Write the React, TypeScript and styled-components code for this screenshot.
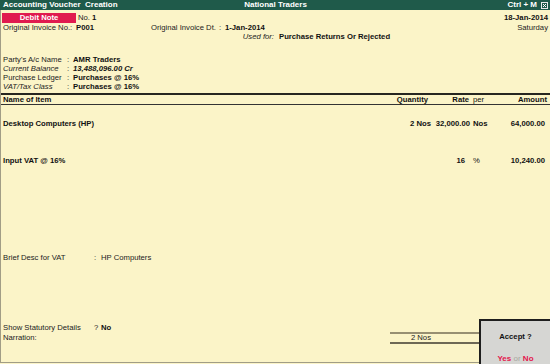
import styled, { createGlobalStyle } from 'styled-components';

const GlobalStyle = createGlobalStyle`
  html, body {
    margin: 0;
    padding: 0;
    background: #fbf4c8;
  }
  * {
    box-sizing: border-box;
  }
`;

const Screen = styled.div`
  position: relative;
  width: 550px;
  height: 364px;
  display: flex;
  flex-direction: column;
  overflow: hidden;
  background: #fbf4c8;
  font-family: 'Liberation Sans', Arial, sans-serif;
  font-size: 7.7px;
  color: #222;
`;

const TitleBar = styled.div`
  height: 10px;
  display: grid;
  grid-template-columns: 1fr auto 1fr;
  align-items: center;
  padding: 0 2px 0 3px;
  background: #1f5a4a;
  color: #fff;
  font-size: 8px;
  font-weight: 700;
  line-height: 10px;
  white-space: pre;
`;

const TitleRight = styled.div`
  display: flex;
  justify-content: flex-end;
  align-items: center;
  gap: 4px;
`;

const Body = styled.div`
  flex: 1;
  display: flex;
  flex-direction: column;
  border-left: 1px solid #a19d86;
  border-bottom: 1px solid #a19d86;
  margin-bottom: 1px;
`;

const Head = styled.div`
  padding: 3px 2px 0 2px;
`;

const HeadRow = styled.div<{ $h: number }>`
  height: ${(p) => p.$h}px;
  line-height: ${(p) => p.$h}px;
  display: flex;
  align-items: center;
  white-space: pre;
`;

const Badge = styled.div`
  width: 74px;
  height: 10px;
  margin: 0 2px 0 -1px;
  background: #e01a4f;
  color: #fff;
  font-weight: 700;
  text-align: center;
  line-height: 10px;
`;

const Spacer = styled.div`
  flex: 1;
`;

const Cell = styled.span<{ $w?: number; $bold?: boolean; $italic?: boolean; $right?: boolean }>`
  ${(p) => (p.$w ? `width: ${p.$w}px; flex: none;` : '')}
  font-weight: ${(p) => (p.$bold ? 700 : 400)};
  font-style: ${(p) => (p.$italic ? 'italic' : 'normal')};
  text-align: ${(p) => (p.$right ? 'right' : 'left')};
  color: ${(p) => (p.$bold ? '#111' : '#222')};
`;

const Party = styled.div`
  margin-top: 13px;
  padding: 0 2px;
`;

const FieldRow = styled.div`
  height: 9px;
  line-height: 9px;
  display: grid;
  grid-template-columns: 64px 6px 1fr;
  white-space: pre;
`;

const Table = styled.div`
  margin-top: 2px;
  border-top: 2px solid #262620;
`;

const Grid = styled.div`
  display: grid;
  grid-template-columns: 1fr 41px 39px 30px 47px;
  padding: 0 3px 0 2px;
  white-space: pre;
`;

const HeaderRow = styled(Grid)`
  height: 10px;
  line-height: 10px;
  border-bottom: 1px solid #333;
  font-weight: 700;
  color: #111;
`;

const ItemRow = styled(Grid)<{ $top: number }>`
  margin-top: ${(p) => p.$top}px;
  height: 10px;
  line-height: 10px;
  font-weight: 700;
  color: #111;
`;

const Num = styled.span<{ $pad?: number; $light?: boolean }>`
  text-align: right;
  padding-right: ${(p) => p.$pad ?? 0}px;
  font-weight: ${(p) => (p.$light ? 400 : 700)};
`;

const Per = styled.span<{ $light?: boolean }>`
  padding-left: 3px;
  font-weight: ${(p) => (p.$light ? 400 : 700)};
`;

const Notes = styled.div`
  margin-top: 87px;
  padding: 0 2px;
`;

const NoteRow = styled.div`
  height: 10px;
  line-height: 10px;
  display: grid;
  grid-template-columns: 91px 7px 1fr;
  white-space: pre;
`;

const Footer = styled(Grid)`
  margin-top: auto;
  padding-bottom: 19px;
  grid-template-rows: 10px 10px;
  line-height: 10px;
`;

const FooterLabel = styled.div`
  grid-column: 1;
  display: grid;
  grid-template-columns: 91px 7px 1fr;
`;

const Total = styled.div`
  grid-column: 2 / 6;
  grid-row: 2;
  margin: -1px -3px 0 0;
  height: 12px;
  line-height: 8px;
  border-top: 2px solid #978f72;
  border-bottom: 2px solid #6d6855;
  display: grid;
  grid-template-columns: 41px 1fr;
`;

const AcceptBox = styled.div`
  position: absolute;
  right: 0;
  bottom: 0;
  width: 71px;
  height: 45px;
  border-top: 2px solid #1e1e1e;
  border-left: 2px solid #1e1e1e;
  background-color: #d6d6d3;
  background-image: radial-gradient(#9fc3bf 0.6px, transparent 0.7px);
  background-size: 4px 4px;
  display: flex;
  flex-direction: column;
  align-items: center;
  padding-top: 11px;
  font-weight: 700;
  color: #111;
`;

const AcceptTitle = styled.div`
  height: 10px;
  line-height: 10px;
`;

const Choice = styled.div`
  margin-top: 12px;
  line-height: 10px;
  font-size: 8px;
  white-space: pre;
`;

const Red = styled.span`
  color: #e4154b;
`;

const Or = styled.span`
  color: #a8a8a0;
  font-weight: 400;
`;

function CloseIcon() {
  return (
    <svg width="7" height="7" viewBox="0 0 7 7">
      <rect x="0.5" y="0.5" width="6" height="6" fill="#1f5a4a" stroke="#e8e8e8" strokeWidth="1" />
      <path d="M2 2 L5 5 M5 2 L2 5" stroke="#fff" strokeWidth="1" />
    </svg>
  );
}

export default function App() {
  return (
    <Screen>
      <GlobalStyle />
      <TitleBar>
        <span>Accounting Voucher  Creation</span>
        <span>National Traders</span>
        <TitleRight>
          <span>Ctrl + M</span>
          <CloseIcon />
        </TitleRight>
      </TitleBar>
      <Body>
        <Head>
          <HeadRow $h={10}>
            <Badge>Debit Note</Badge>
            <Cell>No. </Cell>
            <Cell $bold>1</Cell>
            <Spacer />
            <Cell $bold>18-Jan-2014</Cell>
          </HeadRow>
          <HeadRow $h={9}>
            <Cell $w={73}>Original Invoice No.:</Cell>
            <Cell $w={75} $bold>P001</Cell>
            <Cell $w={68}>Original Invoice Dt.</Cell>
            <Cell $w={6}>:</Cell>
            <Cell $bold>1-Jan-2014</Cell>
            <Spacer />
            <Cell>Saturday</Cell>
          </HeadRow>
          <HeadRow $h={10}>
            <Cell $w={271} $italic $right>Used for:</Cell>
            <Cell $w={5} />
            <Cell $bold>Purchase Returns Or Rejected</Cell>
          </HeadRow>
        </Head>
        <Party>
          <FieldRow>
            <Cell>Party's A/c Name</Cell>
            <Cell>:</Cell>
            <Cell $bold>AMR Traders</Cell>
          </FieldRow>
          <FieldRow>
            <Cell $italic>Current Balance</Cell>
            <Cell>:</Cell>
            <Cell $bold $italic>13,488,096.00 Cr</Cell>
          </FieldRow>
          <FieldRow>
            <Cell>Purchase Ledger</Cell>
            <Cell>:</Cell>
            <Cell $bold>Purchases @ 16%</Cell>
          </FieldRow>
          <FieldRow>
            <Cell $italic>VAT/Tax Class</Cell>
            <Cell>:</Cell>
            <Cell $bold>Purchases @ 16%</Cell>
          </FieldRow>
        </Party>
        <Table>
          <HeaderRow>
            <span>Name of Item</span>
            <Num $pad={3}>Quantity</Num>
            <Num $pad={1}>Rate</Num>
            <Per $light>per</Per>
            <Num>Amount</Num>
          </HeaderRow>
          <ItemRow $top={14}>
            <span>Desktop Computers (HP)</span>
            <Num>2 Nos</Num>
            <Num>32,000.00</Num>
            <Per>Nos</Per>
            <Num $pad={2}>64,000.00</Num>
          </ItemRow>
          <ItemRow $top={27}>
            <span>Input VAT @ 16%</span>
            <span />
            <Num $pad={5}>16</Num>
            <Per $light>%</Per>
            <Num $pad={2}>10,240.00</Num>
          </ItemRow>
        </Table>
        <Notes>
          <NoteRow>
            <Cell>Brief Desc for VAT</Cell>
            <Cell>:</Cell>
            <Cell>HP Computers</Cell>
          </NoteRow>
        </Notes>
        <Footer>
          <FooterLabel>
            <Cell>Show Statutory Details</Cell>
            <Cell>?</Cell>
            <Cell $bold>No</Cell>
          </FooterLabel>
          <FooterLabel>
            <Cell>Narration:</Cell>
          </FooterLabel>
          <Total>
            <Num $light>2 Nos</Num>
          </Total>
        </Footer>
      </Body>
      <AcceptBox>
        <AcceptTitle>Accept ?</AcceptTitle>
        <Choice>
          <Red>Yes</Red> <Or>or</Or> <Red>No</Red>
        </Choice>
      </AcceptBox>
    </Screen>
  );
}
